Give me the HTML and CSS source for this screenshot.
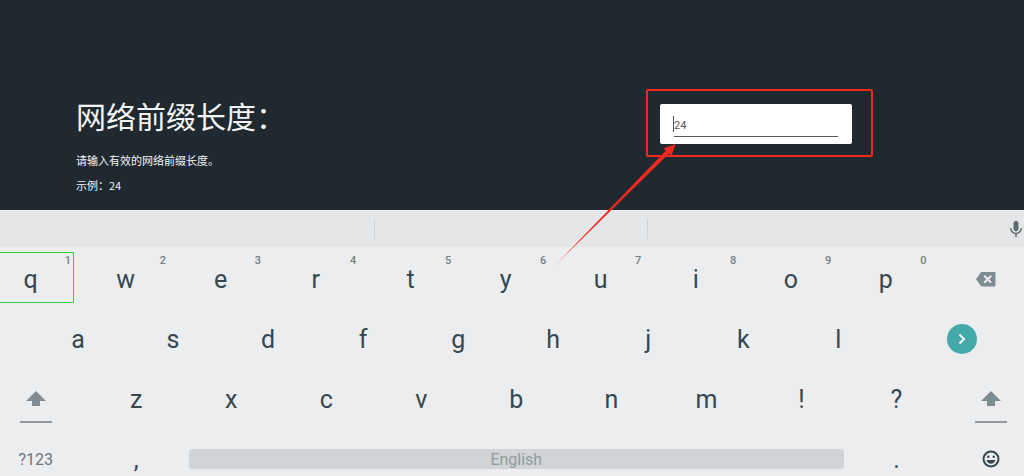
FILE: index.html
```html
<!DOCTYPE html>
<html lang="zh-CN">
  <head>
    <meta charset="UTF-8" />
    <meta name="viewport" content="width=device-width, initial-scale=1.0" />
    <title>网络前缀长度</title>
    <link rel="stylesheet" href="styles.css">
  </head>
  <body>
    <main class="panel">
      <div class="guide">
        <h1><label for="prefix">网络前缀长度：</label></h1>
        <p>请输入有效的网络前缀长度。</p>
        <p>示例：24</p>
      </div>
      <div class="field">
        <input type="text" id="prefix" value="24" />
        <span class="caret"></span>
        <span class="highlight"></span>
        <svg class="arrow" width="124" height="124" viewBox="0 0 124 124">
          <defs>
            <linearGradient id="fade" x1="0" y1="1" x2="1" y2="0">
              <stop offset="0" stop-color="#f5281e" stop-opacity="0.6" />
              <stop offset="0.2" stop-color="#f5281e" />
            </linearGradient>
          </defs>
          <path d="M0 123.500L112 7.500 109.500 5.500 121.500 1 117.500 13 115 10.500Z" fill="url(#fade)" />
        </svg>
      </div>
    </main>

    <section class="keyboard">
      <div class="suggestions">
        <span></span>
        <span></span>
        <span></span>
        <button type="button" class="mic" aria-label="语音输入">
          <svg width="18" height="18" viewBox="0 0 24 24"><path d="M12 15c1.900 0 3.300-1.500 3.300-3.400V4.400C15.300 2.500 13.900 1 12 1S8.700 2.500 8.700 4.400v7.200C8.700 13.500 10.100 15 12 15zm6-4c0 3.500-2.800 6-6 6s-6-2.500-6-6H4c0 4 3.100 7.200 7 7.800V23h2v-4.200c3.900-.6 7-3.800 7-7.800z" /></svg>
        </button>
      </div>

      <div class="keys">
        <div class="row row-top">
          <button type="button" class="active">q<sup>1</sup></button>
          <button type="button">w<sup>2</sup></button>
          <button type="button">e<sup>3</sup></button>
          <button type="button">r<sup>4</sup></button>
          <button type="button">t<sup>5</sup></button>
          <button type="button">y<sup>6</sup></button>
          <button type="button">u<sup>7</sup></button>
          <button type="button">i<sup>8</sup></button>
          <button type="button">o<sup>9</sup></button>
          <button type="button">p<sup>0</sup></button>
          <button type="button" class="icon" aria-label="删除">
            <svg width="20" height="16" viewBox="0 0 20 16"><path d="M6 1h12.500q1 0 1 1v12.500q0 1-1 1H6q-.8 0-1.300-.8L0 8.200 4.700 1.800Q5.200 1 6 1z" /><path class="cross" d="M8.200 4.700l7 7M15.200 4.700l-7 7" /></svg>
          </button>
        </div>

        <div class="row row-home">
          <span></span>
          <button type="button">a</button>
          <button type="button">s</button>
          <button type="button">d</button>
          <button type="button">f</button>
          <button type="button">g</button>
          <button type="button">h</button>
          <button type="button">j</button>
          <button type="button">k</button>
          <button type="button">l</button>
          <button type="button" class="icon" aria-label="下一步">
            <span class="next"><svg width="30" height="30" viewBox="0 0 30 30"><path d="M12.500 10.500l4.500 4.500-4.500 4.500" /></svg></span>
          </button>
        </div>

        <div class="row row-bottom">
          <button type="button" class="icon shift" aria-label="Shift">
            <svg width="20" height="16" viewBox="0 0 20 16"><path d="M10 0l10 10h-6v5H6v-5H0z" /></svg>
          </button>
          <button type="button">z</button>
          <button type="button">x</button>
          <button type="button">c</button>
          <button type="button">v</button>
          <button type="button">b</button>
          <button type="button">n</button>
          <button type="button">m</button>
          <button type="button">!</button>
          <button type="button">?</button>
          <button type="button" class="icon shift" aria-label="Shift">
            <svg width="20" height="16" viewBox="0 0 20 16"><path d="M10 0l10 10h-6v5H6v-5H0z" /></svg>
          </button>
        </div>

        <div class="row row-space">
          <button type="button" class="symbols">?123</button>
          <button type="button">,</button>
          <button type="button" class="icon space"><span>English</span></button>
          <button type="button">.</button>
          <button type="button" class="icon" aria-label="表情">
            <svg class="smile" width="18" height="18" viewBox="0 0 18 18"><circle class="face" cx="9" cy="9" r="7.500" /><circle cx="6.300" cy="6.800" r="1.200" /><circle cx="11.700" cy="6.800" r="1.200" /><path d="M4.500 10h9c-.6 2.300-2.400 3.800-4.500 3.800S5.100 12.300 4.500 10z" /></svg>
          </button>
        </div>
      </div>
    </section>
  </body>
</html>
```
FILE: styles.css
```css
* {
  margin: 0;
  padding: 0;
  box-sizing: border-box;
}
:root {
  --panel-color: #1f292f;
  --key-color: #ebedef;
  --text-color: #37474f;
  --muted-color: #7f8b91;
  --mark-color: #f5281e;
}
body {
  background: var(--key-color);
  height: 100vh;
  overflow: hidden;
  font-family: Roboto, "Noto Sans CJK SC", sans-serif;
}
.panel {
  background: var(--panel-color);
  color: #f2f4f5;
  height: 210px;
  display: flex;
  justify-content: space-between;
  align-items: flex-start;
  padding: 96px 172px 0 76px;
}
.guide h1 {
  font-size: 30px;
  font-weight: 400;
  line-height: 44px;
  margin-bottom: 8px;
}
.guide p {
  font-family: "Noto Sans CJK SC", sans-serif;
  font-size: 11px;
  line-height: 25px;
}
.field {
  position: relative;
  width: 192px;
  background: #fff;
  border-radius: 2px;
  margin-top: 8px;
  padding: 8px 14px 7px;
}
.field input {
  display: block;
  width: 100%;
  height: 25px;
  padding-top: 2px;
  border: none;
  border-bottom: 1px solid #555;
  background: none;
  color: #555;
  font-family: inherit;
  font-size: 11px;
  outline: none;
}
.caret {
  position: absolute;
  left: 13px;
  top: 12px;
  width: 1px;
  height: 16px;
  background: #555;
}
.highlight {
  position: absolute;
  inset: -15px -21px -13px -14px;
  border: 2px solid var(--mark-color);
  border-radius: 2px;
}
.arrow {
  position: absolute;
  right: 174px;
  top: 39px;
  z-index: 2;
}

/* keyboard */
.keyboard {
  overflow: hidden;
}
.keyboard button {
  border: none;
  background: none;
  color: var(--text-color);
  font-family: inherit;
  cursor: pointer;
}
.keyboard svg {
  display: block;
  fill: var(--muted-color);
}
.suggestions {
  position: relative;
  height: 37px;
  background: #e4e6e8;
  border-top: 1px solid #f0f1f2;
  display: grid;
  grid-template-columns: 375fr 273fr 376fr;
  align-items: center;
}
.suggestions > span {
  height: 20px;
  border-right: 1px solid #d0d3d5;
}
.suggestions > span:nth-child(3) {
  border: none;
}
.suggestions .mic {
  position: absolute;
  right: -1px;
  top: 9px;
}
.suggestions .mic svg {
  fill: #5d6b72;
}
.keys {
  margin: 0 -15px 0 -17px;
  padding-top: 2px;
}
.row {
  display: grid;
  height: 60px;
}
.row-top {
  grid-template-columns: repeat(10, 9fr) 10fr;
}
.row-home {
  grid-template-columns: 4.5fr repeat(9, 9fr) 14.5fr;
}
.row-bottom {
  grid-template-columns: 10fr repeat(10, 9fr);
}
.row-space {
  grid-template-columns: 10fr 9fr 63fr 9fr 9fr;
}
.row button {
  position: relative;
  display: flex;
  justify-content: center;
  align-items: center;
  min-width: 0;
  padding-top: 2px;
  font-size: 25px;
  line-height: 30px;
}
.row .icon {
  padding-top: 0;
}
.row sup {
  position: absolute;
  top: 5px;
  right: 7px;
  color: #757f85;
  font-size: 11px;
  font-weight: 500;
  line-height: 14px;
}
.row .active::after {
  content: "";
  position: absolute;
  inset: 3px 4px 6px 0;
  border: 1px solid #35cf45;
}
.row .cross {
  fill: none;
  stroke: var(--key-color);
  stroke-width: 2;
}
.next {
  background: #43a9a9;
  border-radius: 50%;
}
.row .next svg {
  fill: none;
  stroke: #fff;
  stroke-width: 2;
}
.shift::after {
  content: "";
  position: absolute;
  bottom: 6px;
  width: 32px;
  height: 2px;
  background: #92999d;
}
.row .symbols {
  color: #6b767c;
  font-size: 16px;
}
.space span {
  width: 100%;
  height: 20px;
  margin: 0 5px;
  background: #cfd4d6;
  border-radius: 3px;
  color: #929b9f;
  font-size: 16px;
  line-height: 22px;
}
.row .smile {
  fill: var(--text-color);
}
.row .smile .face {
  fill: none;
  stroke: var(--text-color);
  stroke-width: 2;
}
```
